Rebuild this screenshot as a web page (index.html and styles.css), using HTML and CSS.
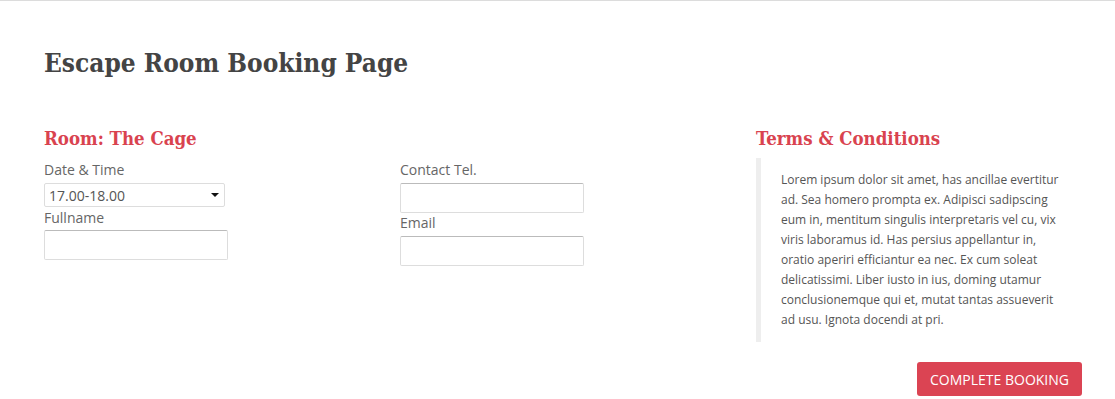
FILE: index.html
```html
<!DOCTYPE html>
<html lang="en">
<head>
<meta charset="utf-8">
<title>Escape Room Booking Page</title>
<link rel="stylesheet" href="styles.css">
</head>
<body>
<div class="page">
  <h1 class="title">Escape Room Booking Page</h1>
  <div class="main">
    <section class="booking">
      <h2 class="section-title">Room: The Cage</h2>
      <form class="form">
        <div class="form-col">
          <label class="label" for="dt">Date &amp; Time</label>
          <div class="select-wrap">
            <select id="dt" class="select">
              <option>17.00-18.00</option>
            </select>
            <span class="caret"></span>
          </div>
          <label class="label label-gap-left" for="name">Fullname</label>
          <input id="name" class="input input-left" type="text">
        </div>
        <div class="form-col">
          <label class="label" for="tel">Contact Tel.</label>
          <input id="tel" class="input" type="text">
          <label class="label" for="email">Email</label>
          <input id="email" class="input" type="text">
        </div>
      </form>
    </section>
    <aside class="terms">
      <h2 class="section-title">Terms &amp; Conditions</h2>
      <blockquote class="terms-text">
        Lorem ipsum dolor sit amet, has ancillae evertitur ad. Sea homero prompta ex. Adipisci sadipscing eum in, mentitum singulis interpretaris vel cu, vix viris laboramus id. Has persius appellantur in, oratio aperiri efficiantur ea nec. Ex cum soleat delicatissimi. Liber iusto in ius, doming utamur conclusionemque qui et, mutat tantas assueverit ad usu. Ignota docendi at pri.
      </blockquote>
      <div class="actions">
        <button class="btn" type="button">COMPLETE BOOKING</button>
      </div>
    </aside>
  </div>
</div>
</body>
</html>
```

FILE: styles.css
```css
html, body {
  margin: 0;
  padding: 0;
  background: #fff;
}
body {
  border-top: 1px solid #dcdcdc;
  font-family: "Open Sans", "Liberation Sans", sans-serif;
  color: #555;
}
.page {
  padding: 44px 33px 0 44px;
}
.title {
  margin: 0;
  font-family: "DejaVu Serif Condensed", "DejaVu Serif", serif;
  font-weight: bold;
  font-size: 26px;
  line-height: 36px;
  color: #444;
}
.main {
  display: grid;
  grid-template-columns: 712px 1fr;
  margin-top: 45px;
}
.section-title {
  margin: 0;
  font-family: "DejaVu Serif Condensed", "DejaVu Serif", serif;
  font-weight: bold;
  font-size: 18.5px;
  line-height: 26px;
  color: #d9434f;
}
.form {
  display: grid;
  grid-template-columns: 356px 1fr;
  margin: 8px 0 0;
}
.form-col {
  display: flex;
  flex-direction: column;
  align-items: flex-start;
}
.label {
  font-size: 14px;
  line-height: 20px;
  color: #666;
}
.label-gap-left {
  margin-top: 1px;
}
.select-wrap {
  position: relative;
  width: 181px;
  height: 24px;
  margin-top: 3px;
}
.select {
  width: 100%;
  height: 100%;
  box-sizing: border-box;
  border: 1px solid #ddd;
  border-radius: 2px;
  background: #fff;
  font-family: "Open Sans", "Liberation Sans", sans-serif;
  font-size: 14px;
  color: #555;
  padding: 0 4px;
  -webkit-appearance: none;
  appearance: none;
}
.caret {
  position: absolute;
  right: 6px;
  top: 10px;
  width: 0;
  height: 0;
  border-left: 4px solid transparent;
  border-right: 4px solid transparent;
  border-top: 4px solid #111;
  pointer-events: none;
}
.input {
  width: 184px;
  height: 30px;
  box-sizing: border-box;
  border: 1px solid #ddd;
  border-top-color: #bbb;
  border-radius: 2px;
  margin-top: 3px;
}
.input-left {
  margin-top: 2px;
}
.terms-text {
  margin: 6px 0 0;
  border-left: 5px solid #eee;
  padding: 12px 20px 12px 20px;
  font-size: 12px;
  line-height: 20px;
  color: #555;
  max-width: 280px;
}
.actions {
  display: flex;
  justify-content: flex-end;
  margin-top: 20px;
}
.btn {
  background: #db4453;
  color: #fff;
  border: none;
  border-radius: 3px;
  height: 34px;
  width: 165px;
  font-family: "Open Sans", "Liberation Sans", sans-serif;
  font-size: 14px;
  padding: 0;
}
```
